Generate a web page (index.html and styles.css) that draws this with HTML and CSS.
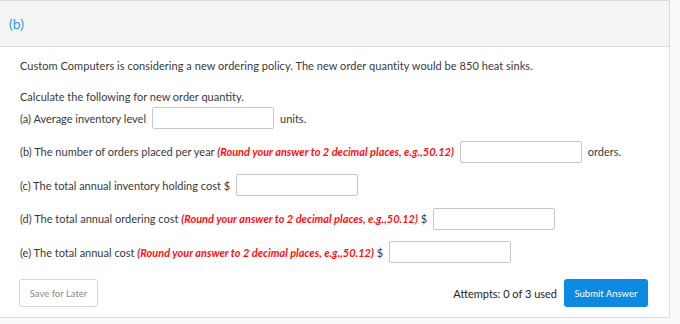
FILE: index.html
```html
<!DOCTYPE html>
<html>
<head>
<meta charset="utf-8">
<link rel="stylesheet" href="styles.css">
</head>
<body>
<div class="page">
  <div class="panel">
    <div class="panel-head"><span class="part">(b)</span></div>
    <div class="panel-body">
      <p class="intro">Custom Computers is considering a new ordering policy. The new order quantity would be 850 heat sinks.</p>
      <p class="calc">Calculate the following for new order quantity.</p>
      <div class="row row-a">
        <span>(a) Average inventory level</span>
        <input class="ans" type="text">
        <span>units.</span>
      </div>
      <div class="row">
        <span>(b) The number of orders placed per year <em class="hint">(Round your answer to 2 decimal places, e.g.,50.12)</em></span>
        <input class="ans" type="text">
        <span>orders.</span>
      </div>
      <div class="row">
        <span>(c) The total annual inventory holding cost $</span>
        <input class="ans" type="text">
      </div>
      <div class="row">
        <span>(d) The total annual ordering cost <em class="hint">(Round your answer to 2 decimal places, e.g.,50.12)</em> $</span>
        <input class="ans" type="text">
      </div>
      <div class="row">
        <span>(e) The total annual cost <em class="hint">(Round your answer to 2 decimal places, e.g.,50.12)</em> $</span>
        <input class="ans" type="text">
      </div>
      <div class="footer">
        <button class="btn-save" type="button">Save for Later</button>
        <div class="footer-right">
          <span class="attempts">Attempts: 0 of 3 used</span>
          <button class="btn-submit" type="button">Submit Answer</button>
        </div>
      </div>
    </div>
  </div>
</div>
</body>
</html>
```
FILE: styles.css
```css
html, body {
  margin: 0;
  padding: 0;
  background: #fff;
}
body {
  font-family: Lato, "Open Sans", sans-serif;
  color: #3a3a3a;
}
.page {
  width: 680px;
  height: 324px;
  background: #fafafa;
}
.panel {
  width: 669px;
  border: 1px solid #dcdcdc;
  border-left: none;
  background: #fff;
}
.panel-head {
  height: 45px;
  background: #f4f4f4;
  border-bottom: 1px solid #dcdcdc;
  display: flex;
  align-items: center;
  padding-left: 9px;
}
.part {
  color: #3a98e8;
  font-size: 14px;
}
.panel-body {
  padding: 12px 20px 10px 20px;
  font-size: 11px;
}
.intro, .calc {
  margin: 0;
  line-height: 14px;
}
.intro {
  letter-spacing: 0.05px;
}
.calc {
  margin-top: 17px;
}
.row {
  display: flex;
  align-items: center;
  gap: 6px;
  margin-top: 11.5px;
  height: 22px;
}
.row-a {
  margin-top: 3px;
}
.hint {
  color: #ff1010;
  font-weight: bold;
  font-style: italic;
}
.ans {
  width: 122px;
  height: 22px;
  box-sizing: border-box;
  border: 1px solid #c8c8c8;
  border-radius: 2px;
  margin: 0;
  padding: 0 4px;
  background: #fff;
}
.footer {
  display: flex;
  justify-content: space-between;
  align-items: center;
  margin-top: 16px;
}
.footer-right {
  display: flex;
  align-items: center;
  gap: 7px;
}
.btn-save {
  width: 79px;
  height: 28px;
  margin-left: -1px;
  border: 1px solid #d6d6d6;
  border-radius: 3px;
  background: #fff;
  color: #8a8a8a;
  font-family: Lato, sans-serif;
  font-size: 9.5px;
  padding: 0;
}
.attempts {
  font-size: 11px;
  color: #222;
}
.btn-submit {
  width: 84px;
  height: 28px;
  border: none;
  border-radius: 3px;
  background: #0b8ae0;
  color: #fff;
  font-family: Lato, sans-serif;
  font-size: 9.5px;
  padding: 0;
  margin-right: 1px;
}
```
